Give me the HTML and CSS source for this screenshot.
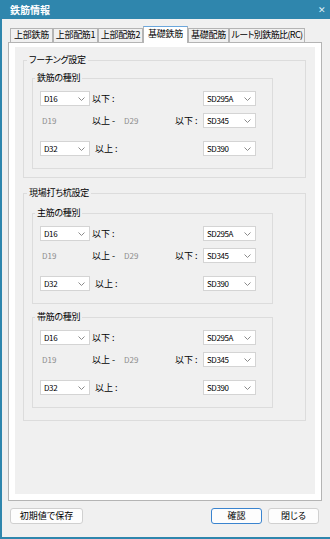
FILE: index.html
```html
<!DOCTYPE html>
<html lang="ja">
<head>
  <meta charset="UTF-8" />
  <title>鉄筋情報</title>
  <link rel="stylesheet" href="styles.css">
</head>
<body>
  <div class="window">
    <div class="titlebar">
      <span class="title">鉄筋情報</span>
      <span class="close">✕</span>
    </div>

    <div class="tabs">
      <div class="tab w1">上部鉄筋</div>
      <div class="tab w2">上部配筋1</div>
      <div class="tab w3">上部配筋2</div>
      <div class="tab active w4">基礎鉄筋</div>
      <div class="tab w5">基礎配筋</div>
      <div class="tab w6">ルート別鉄筋比(RC)</div>
    </div>

    <div class="tabpage">
      <div class="content">

        <fieldset class="group outer">
          <legend>フーチング設定</legend>
          <fieldset class="group inner">
            <legend>鉄筋の種別</legend>
            <div class="row r1">
              <div class="combo"><span>D16</span><svg width="7" height="4" viewBox="0 0 7 4"><polyline points="0.5,0.5 3.5,3.5 6.5,0.5" /></svg></div>
              <span class="lbl">以下 :</span>
              <span></span><span></span>
              <div class="combo"><span>SD295A</span><svg width="7" height="4" viewBox="0 0 7 4"><polyline points="0.5,0.5 3.5,3.5 6.5,0.5" /></svg></div>
            </div>
            <div class="row r2">
              <span class="dim">D19</span>
              <span class="lbl">以上 -</span>
              <span class="dim">D29</span>
              <span class="lbl">以下 :</span>
              <div class="combo"><span>SD345</span><svg width="7" height="4" viewBox="0 0 7 4"><polyline points="0.5,0.5 3.5,3.5 6.5,0.5" /></svg></div>
            </div>
            <div class="row r3">
              <div class="combo"><span>D32</span><svg width="7" height="4" viewBox="0 0 7 4"><polyline points="0.5,0.5 3.5,3.5 6.5,0.5" /></svg></div>
              <span class="lbl up">以上 :</span>
              <span></span><span></span>
              <div class="combo"><span>SD390</span><svg width="7" height="4" viewBox="0 0 7 4"><polyline points="0.5,0.5 3.5,3.5 6.5,0.5" /></svg></div>
            </div>
          </fieldset>
        </fieldset>

        <fieldset class="group outer second">
          <legend>現場打ち杭設定</legend>
          <fieldset class="group inner">
            <legend>主筋の種別</legend>
            <div class="row r1">
              <div class="combo"><span>D16</span><svg width="7" height="4" viewBox="0 0 7 4"><polyline points="0.5,0.5 3.5,3.5 6.5,0.5" /></svg></div>
              <span class="lbl">以下 :</span>
              <span></span><span></span>
              <div class="combo"><span>SD295A</span><svg width="7" height="4" viewBox="0 0 7 4"><polyline points="0.5,0.5 3.5,3.5 6.5,0.5" /></svg></div>
            </div>
            <div class="row r2">
              <span class="dim">D19</span>
              <span class="lbl">以上 -</span>
              <span class="dim">D29</span>
              <span class="lbl">以下 :</span>
              <div class="combo"><span>SD345</span><svg width="7" height="4" viewBox="0 0 7 4"><polyline points="0.5,0.5 3.5,3.5 6.5,0.5" /></svg></div>
            </div>
            <div class="row r3">
              <div class="combo"><span>D32</span><svg width="7" height="4" viewBox="0 0 7 4"><polyline points="0.5,0.5 3.5,3.5 6.5,0.5" /></svg></div>
              <span class="lbl up">以上 :</span>
              <span></span><span></span>
              <div class="combo"><span>SD390</span><svg width="7" height="4" viewBox="0 0 7 4"><polyline points="0.5,0.5 3.5,3.5 6.5,0.5" /></svg></div>
            </div>
          </fieldset>

          <fieldset class="group inner next">
            <legend>帯筋の種別</legend>
            <div class="row r1">
              <div class="combo"><span>D16</span><svg width="7" height="4" viewBox="0 0 7 4"><polyline points="0.5,0.5 3.5,3.5 6.5,0.5" /></svg></div>
              <span class="lbl">以下 :</span>
              <span></span><span></span>
              <div class="combo"><span>SD295A</span><svg width="7" height="4" viewBox="0 0 7 4"><polyline points="0.5,0.5 3.5,3.5 6.5,0.5" /></svg></div>
            </div>
            <div class="row r2">
              <span class="dim">D19</span>
              <span class="lbl">以上 -</span>
              <span class="dim">D29</span>
              <span class="lbl">以下 :</span>
              <div class="combo"><span>SD345</span><svg width="7" height="4" viewBox="0 0 7 4"><polyline points="0.5,0.5 3.5,3.5 6.5,0.5" /></svg></div>
            </div>
            <div class="row r3">
              <div class="combo"><span>D32</span><svg width="7" height="4" viewBox="0 0 7 4"><polyline points="0.5,0.5 3.5,3.5 6.5,0.5" /></svg></div>
              <span class="lbl up">以上 :</span>
              <span></span><span></span>
              <div class="combo"><span>SD390</span><svg width="7" height="4" viewBox="0 0 7 4"><polyline points="0.5,0.5 3.5,3.5 6.5,0.5" /></svg></div>
            </div>
          </fieldset>
        </fieldset>

      </div>
    </div>

    <div class="footer">
      <button class="btn save">初期値で保存</button>
      <div class="right">
        <button class="btn ok">確認</button>
        <button class="btn close-btn">閉じる</button>
      </div>
    </div>
  </div>
</body>
</html>
```

FILE: styles.css
```css
* {
  margin: 0;
  padding: 0;
  box-sizing: border-box;
}

body {
  background: #f0f0f0;
  font-family: "Noto Sans CJK JP", sans-serif;
  font-size: 9px;
  font-feature-settings: "palt";
  color: #000;
}

.window {
  width: 330px;
  height: 539px;
  background: #f0f0f0;
  border-left: 2px solid #2f86ad;
  border-bottom: 2px solid #2f86ad;
  display: flex;
  flex-direction: column;
}

.titlebar {
  height: 19px;
  margin-left: -2px;
  background: #2f86ad;
  color: #fff;
  display: flex;
  align-items: center;
  justify-content: space-between;
  padding: 0 4px 0 10px;
}

.title {
  font-weight: bold;
  font-size: 10px;
  line-height: 12px;
}

.close {
  font-size: 9px;
  line-height: 10px;
  color: #dfeef5;
}

/* tabs */
.tabs {
  height: 16px;
  margin-top: 7px;
  padding-left: 8px;
  display: flex;
  align-items: flex-end;
}

.tab {
  height: 14px;
  border: 1px solid #b4b4b4;
  border-bottom: none;
  background: #f0f0f0;
  text-align: center;
  line-height: 12px;
  font-size: 9px;
  letter-spacing: -0.3px;
  white-space: nowrap;
  overflow: hidden;
}

.tab.active {
  height: 17px;
  margin-bottom: -1px;
  background: #fff;
  border-color: #b4b4b4;
  border-top: 1px solid #6aa6dc;
  line-height: 14px;
  position: relative;
}

.w1 { width: 43px; }
.w2 { width: 45px; }
.w3 { width: 45px; }
.w4 { width: 45px; }
.w5 { width: 41px; }
.w6 { width: 76px; letter-spacing: -0.6px; }

.tabpage {
  margin-left: 6px;
  width: 314px;
  height: 459px;
  border: 1px solid #b4b4b4;
  background: #fff;
  padding: 4px 6px 6px 6px;
  display: flex;
}

.content {
  flex: 1;
  background: #f0f0f0;
  padding: 6px 8px;
}

/* group boxes */
.group {
  border: 1px solid #dcdcdc;
  min-width: 0;
}

.group legend {
  font-size: 9px;
  line-height: 14px;
  letter-spacing: -0.3px;
  padding: 0 2px;
  margin-left: -5px;
}

.outer {
  width: 283px;
  padding: 4px 8px 8px 8px;
}

.outer.second {
  margin-top: 8px;
  padding-top: 6px;
  padding-bottom: 12px;
}

.inner {
  width: 241px;
  padding: 6px 7px 12px 7px;
}

.inner.next {
  margin-top: 6px;
}

.row {
  display: grid;
  grid-template-columns: 50px 32px 51px 30px 53px;
  height: 15px;
  align-items: center;
  line-height: 14px;
}

.r2 { margin-top: 7px; }
.r3 { margin-top: 13px; }

.lbl {
  padding-left: 2px;
  white-space: nowrap;
}

.lbl.up {
  padding-left: 5px;
}

.dim {
  color: #8c8c8c;
  padding-left: 2px;
  font-size: 8px;
}

.combo {
  height: 15px;
  background: #fff;
  border: 1px solid #d4d4d4;
  display: flex;
  align-items: center;
  justify-content: space-between;
  padding: 0 4px 0 3px;
  font-size: 8px;
  letter-spacing: -0.4px;
}

.combo svg polyline {
  fill: none;
  stroke: #8a8a8a;
  stroke-width: 1;
}

/* footer buttons */
.footer {
  display: flex;
  margin-top: 7px;
  padding: 0 11px 0 8px;
}

.right {
  margin-left: auto;
  display: flex;
  gap: 6px;
}

.btn {
  height: 16px;
  background: #fdfdfd;
  border: 1px solid #d0d0d0;
  border-radius: 3px;
  font-family: "Noto Sans CJK JP", sans-serif;
  font-feature-settings: "palt";
  font-size: 9px;
  line-height: 14px;
  color: #000;
}

.save { width: 73px; }
.ok { width: 51px; border-color: #3a84cf; }
.close-btn { width: 51px; }
```
